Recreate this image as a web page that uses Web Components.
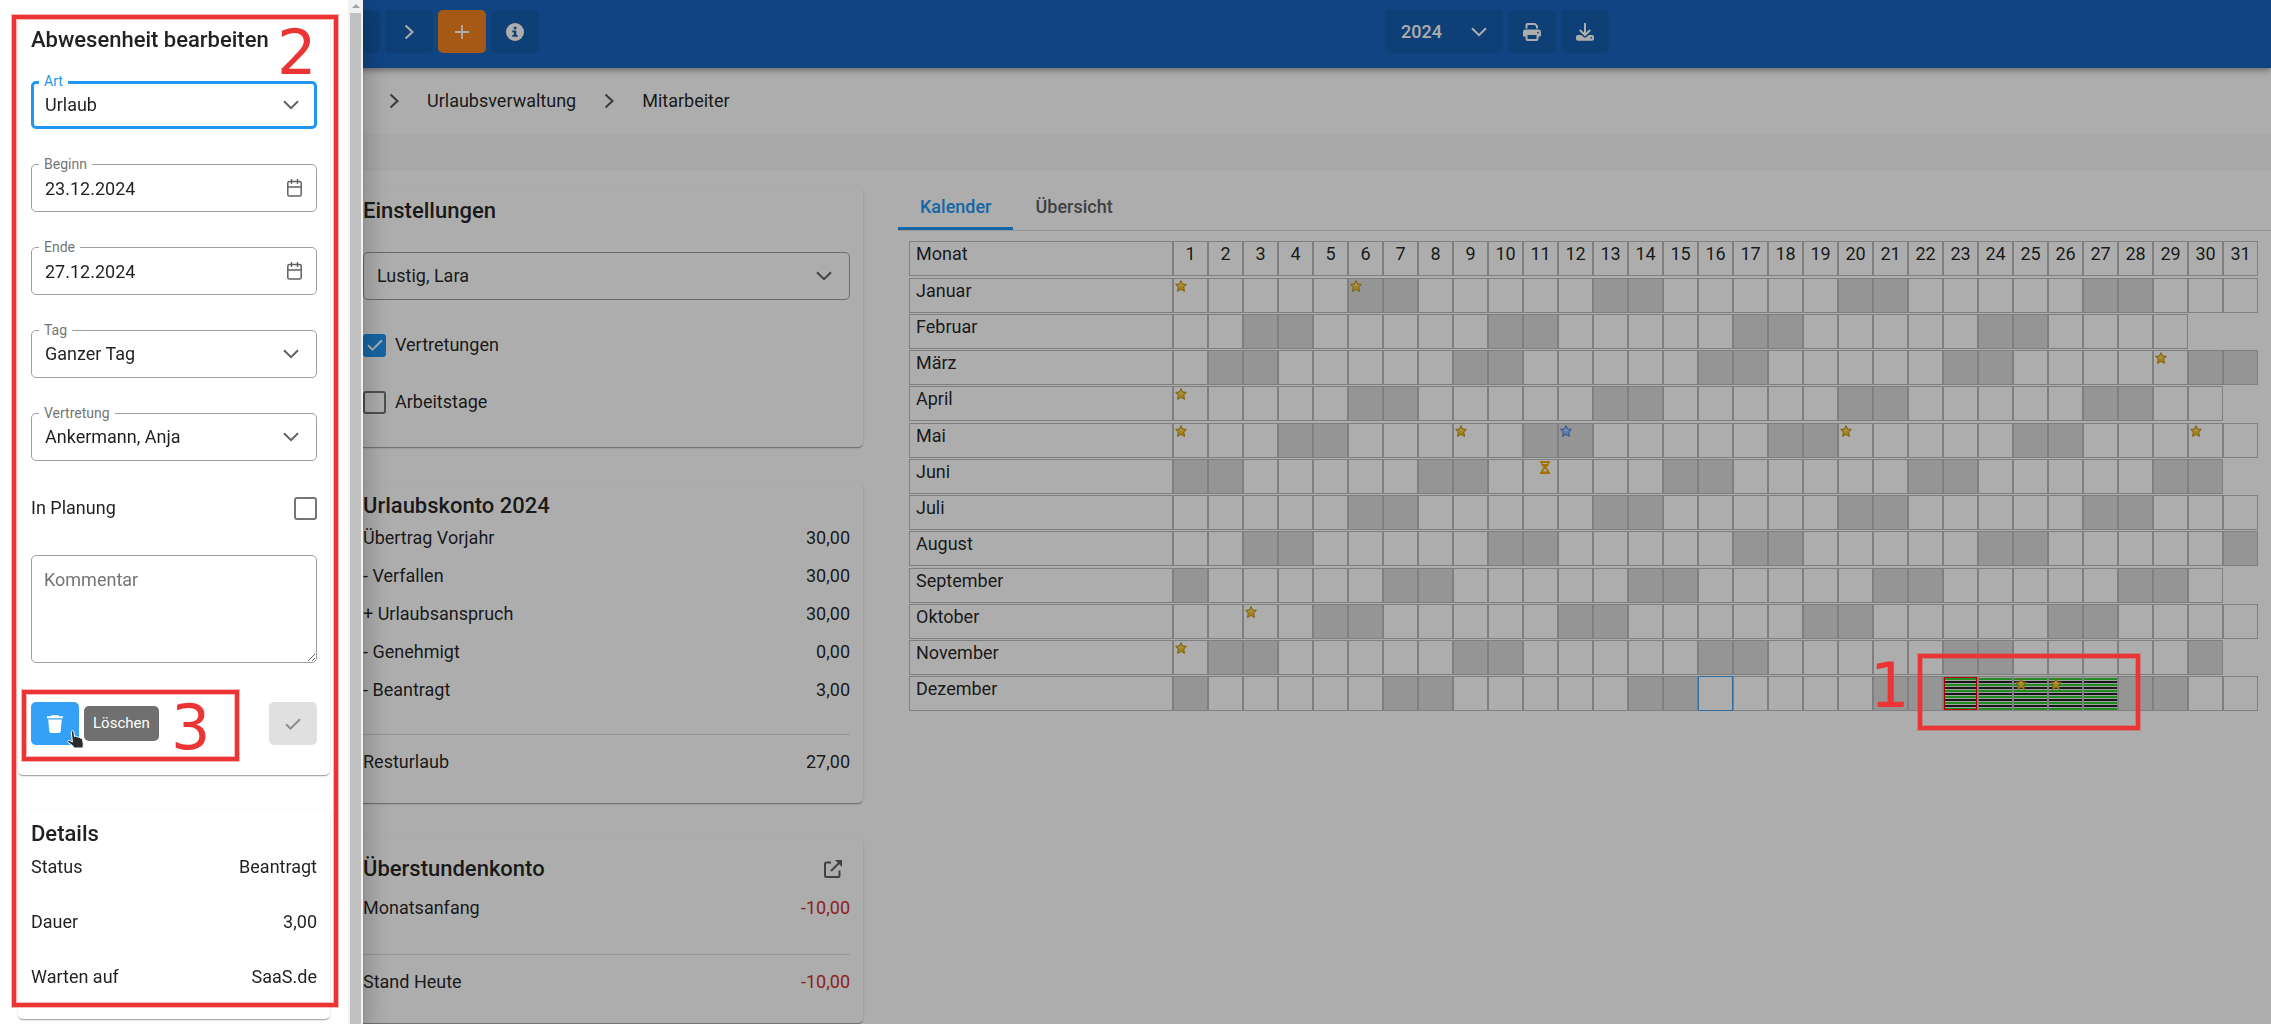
<!DOCTYPE html>
<html lang="de">
<head>
<meta charset="utf-8">
<title>Urlaubsverwaltung</title>
<style>
  html, body { margin: 0; height: 100%; }
  body { overflow: hidden; background: #fff; color: rgba(0,0,0,.87); font: 400 18px/24px Roboto, "Noto Sans", sans-serif; }
</style>
</head>
<body>
<absence-app></absence-app>

<script>
const ICONS = {
  'chevron-right': ['0 0 10 16', '<path d="M1.5 1.5 8.5 8l-7 6.5" fill="none" stroke="currentColor" stroke-width="2"/>', 10, 16],
  'chevron-left': ['0 0 10 16', '<path d="M8.500 1.500 1.500 8l7 6.500" fill="none" stroke="currentColor" stroke-width="2"/>', 10, 16],
  'chevron-down': ['0 0 16 10', '<path d="M1 1.200 8 8.200l7-7" fill="none" stroke="currentColor" stroke-width="2"/>', 16, 10],
  plus: ['0 0 16 16', '<path d="M8 1v14M1 8h14" stroke="currentColor" stroke-width="1.800"/>', 16, 16],
  info: ['0 0 18 18', '<circle cx="9" cy="9" r="9" fill="currentColor"/><path fill="var(--hole,#155dae)" d="M7.800 3.800h2.600v2.400H7.800zM6.300 7.400h4v4.600h1.400v1.800H6.300V12h1.500V9.200H6.300z"/>', 18, 18],
  print: ['0 0 18 18', '<path fill="currentColor" d="M4.500 0h7.700L15 2.800V5.500h-2V3.600L11.600 2H4.500v3.500h-2V2a2 2 0 0 1 2-2zM2.500 6.500h13A2.500 2.500 0 0 1 18 9v3.500a1 1 0 0 1-1 1h-1.500V16a2 2 0 0 1-2 2h-9a2 2 0 0 1-2-2v-2.500H1a1 1 0 0 1-1-1V9a2.500 2.500 0 0 1 2.500-2.500zM4.500 12v4h9v-4zM15 8.700a.9.9 0 1 0 0 1.800.9.9 0 0 0 0-1.800z" fill-rule="evenodd"/>', 18, 18],
  download: ['0 0 18 18', '<path d="M9 0v11.500M3.800 7 9 12l5.200-5" fill="none" stroke="currentColor" stroke-width="2"/><path fill="currentColor" fill-rule="evenodd" d="M2 12h3.200l2.300 2.100a2.200 2.200 0 0 0 3 0L12.800 12H16a2 2 0 0 1 2 2v1.800a2 2 0 0 1-2 2H2a2 2 0 0 1-2-2V14a2 2 0 0 1 2-2zm13.200 2.100a.8.8 0 1 0 0 1.600.8.8 0 0 0 0-1.600z"/>', 18, 18],
  calendar: ['0 0 15 18', '<rect x=".8" y="2.600" width="13.400" height="14.400" rx="1.600" fill="none" stroke="currentColor" stroke-width="1.500"/><path d="M1 8h13M4.500 0v5M10.500 0v5" fill="none" stroke="currentColor" stroke-width="1.400"/>', 15, 18],
  trash: ['0 0 16 18', '<path fill="currentColor" d="M5 0h6l1 1.200h4v2H0v-2h4zM1.200 4.600h13.600L13.700 16.500a1.700 1.700 0 0 1-1.700 1.500H4a1.700 1.700 0 0 1-1.700-1.500z"/>', 16, 18],
  check: ['0 0 16 12', '<path d="M1 6.300 5.500 10.600 15 1.200" fill="none" stroke="currentColor" stroke-width="2"/>', 16, 12],
  external: ['0 0 18 18', '<path d="M7 2.500H2.300A1.300 1.300 0 0 0 1 3.800V15.700A1.300 1.300 0 0 0 2.300 17H14.200a1.300 1.300 0 0 0 1.300-1.300V10.500" fill="none" stroke="currentColor" stroke-width="2"/><path d="M7 11 15 3" stroke="currentColor" stroke-width="2"/><path d="M11 0h7v7z" fill="currentColor"/>', 18, 18],
  star: ['0 0 12 12', '<path d="M6 .6 7.600 4 11.400 4.400 8.700 7 9.500 11.400 6 9.400 2.500 11.400 3.300 7 .6 4.400 4.400 4z" fill="var(--fill,#f2c32c)" stroke="var(--edge,#b98d14)"/><path d="M6 2 7 4.800 9.600 5 5.900 6.400 2.400 5 5 4.800z" fill="#fff" opacity=".35"/>', 12, 12],
  hourglass: ['0 0 10 13', '<path fill="#f2ac00" fill-rule="evenodd" d="M0 0h10v2H9v1.500L6.400 6.500 9 9.500V11h1v2H0v-2h1V9.500l2.600-3L1 3.500V2H0zM2.500 2v1h5V2zM5 7.600 2.800 10.400h4.400z"/>', 10, 13],
  hand: ['0 0 17 19', '<path d="M4.200 1.600c.6-1.300 2.500-1.100 2.700.4l.6 4.600c.7-.7 1.800-.4 2.100.3.700-.5 1.700-.2 2 .6.800-.4 1.700 0 2 .8 1 0 1.700.5 2 1.500l.7 4.200-.3 4H7.200L5.500 15.500 1 12.400c-.9-1.200.3-2.400 1.600-1.900L5.400 12z" fill="#2b2b2b" stroke="#fff"/>', 17, 19]
};

/* Base class: clones the template text of the class into an open shadow root. */
class Base extends HTMLElement {
  connectedCallback() {
    if (this.shadowRoot) return;
    const t = document.createElement('template');
    t.innerHTML = '<style>*{box-sizing:border-box}button,select,input,textarea{font:inherit;color:inherit;margin:0}' + this.css() + '</style>' + this.html();
    this.attachShadow({ mode: 'open' }).append(t.content.cloneNode(true));
  }
  css() { return ''; }
  html() { return '<slot></slot>'; }
  a(n, d = '') { return this.getAttribute(n) ?? d; }
}

customElements.define('ui-icon', class extends Base {
  css() { return ':host{display:inline-flex;flex:none;pointer-events:none}svg{display:block}'; }
  html() {
    const [box, body, w, h] = ICONS[this.a('name')];
    return `<svg viewBox="${box}" width="${w}" height="${h}" aria-hidden="true">${body}</svg>`;
  }
});

customElements.define('tool-button', class extends Base {
  css() {
    return `:host{display:block}
      button{display:flex;align-items:center;justify-content:center;width:48px;height:43px;padding:0;border:0;border-radius:5px;background:var(--tone,#155dae);color:var(--ink,#fff)}
      :host([plain]) button{width:34px;height:41px;background:none;color:#616161}`;
  }
  html() { return `<button type="button" aria-label="${this.a('label')}" ${this.hasAttribute('off') ? 'disabled' : ''}><ui-icon name="${this.a('icon')}"></ui-icon></button>`; }
});

customElements.define('app-header', class extends Base {
  css() {
    return `:host{display:block;position:relative;z-index:1;background:#1865c2;box-shadow:0 2px 4px -1px rgba(0,0,0,.2),0 4px 5px rgba(0,0,0,.14),0 1px 10px rgba(0,0,0,.12)}
      header{display:flex;height:68px;padding:10px 0 15px 332px}
      .group{display:flex;gap:5px}
      .a{flex:23}.b{flex:18}
      .year{display:grid;align-items:center;width:118px;border-radius:5px;background:#155dae;color:#fff}
      .year>*{grid-area:1/1}
      select{appearance:none;border:0;background:none;height:43px;padding:0 16px;font-weight:500}
      .year ui-icon{justify-self:end;margin-right:16px}`;
  }
  html() {
    return `<header>
      <div class="group">
        <tool-button icon="chevron-left" label="Zurück"></tool-button>
        <tool-button icon="chevron-right" label="Weiter"></tool-button>
        <tool-button icon="plus" label="Neu" style="--tone:#f58220"></tool-button>
        <tool-button icon="info" label="Info"></tool-button>
      </div>
      <span class="a"></span>
      <div class="group">
        <div class="year"><select aria-label="Jahr"><option>2024</option></select><ui-icon name="chevron-down"></ui-icon></div>
        <tool-button icon="print" label="Drucken"></tool-button>
        <tool-button icon="download" label="Herunterladen"></tool-button>
      </div>
      <span class="b"></span>
    </header>`;
  }
});

customElements.define('bread-crumbs', class extends Base {
  css() {
    return `:host{display:block;background:#fff;box-shadow:0 1px 3px rgba(0,0,0,.14),0 2px 6px rgba(0,0,0,.08)}
      nav{display:flex;align-items:center;gap:28px;height:66px;padding-left:389px}
      a{color:inherit;text-decoration:none}
      ui-icon{color:#555}`;
  }
  html() {
    return `<nav aria-label="Pfad"><ui-icon name="chevron-right"></ui-icon><a href="#verwaltung">Urlaubsverwaltung</a><ui-icon name="chevron-right"></ui-icon><a href="#mitarbeiter">Mitarbeiter</a></nav>`;
  }
});

customElements.define('card-panel', class extends Base {
  css() {
    return `:host{display:block;padding:10px 13px 12px;border-radius:5px;background:#fff;box-shadow:0 2px 1px -1px rgba(0,0,0,.2),0 1px 1px rgba(0,0,0,.14),0 1px 3px rgba(0,0,0,.12)}
      .head{display:flex;align-items:center;justify-content:space-between}
      h2{margin:0;font-size:22px;font-weight:500;line-height:27px}`;
  }
  html() { return `<div class="head"><h2>${this.a('heading')}</h2><slot name="action"></slot></div><slot></slot>`; }
});

customElements.define('form-field', class extends Base {
  css() {
    return `:host{display:block;position:relative}
      .box{display:grid;align-items:center;border:1px solid #9e9e9e;border-radius:5px;background:#fff}
      :host([active]) .box{border:3px solid #2196f3}
      .box>*{grid-area:1/1}
      select,input,textarea{appearance:none;width:100%;height:46px;padding:0 13px;border:0;outline:0;background:none}
      :host([active]) select{height:42px;padding:0 11px}
      textarea{display:block;height:106px;padding:12px;resize:vertical}
      textarea::placeholder{color:#757575}
      ui-icon{justify-self:end;margin-right:var(--inset,17px);color:#616161}
      :host([active]) ui-icon{margin-right:15px}
      label{position:absolute;left:8px;top:-8px;padding:0 5px;background:#fff;font-size:14px;line-height:16px;color:#757575}
      :host([active]) label{color:#2196f3}`;
  }
  html() {
    const k = this.a('kind', 'select'), l = this.a('label'), v = this.a('value');
    const label = this.hasAttribute('bare') ? '' : `<label for="f">${l}</label>`;
    const aria = this.hasAttribute('bare') ? `aria-label="${l}"` : '';
    const body = k === 'select' ? `<select id="f" ${aria}><option>${v}</option></select><ui-icon name="chevron-down"></ui-icon>`
      : k === 'date' ? `<input id="f" type="text" value="${v}"><ui-icon name="calendar" style="--inset:14px"></ui-icon>`
      : `<textarea id="f" ${aria} placeholder="${l}"></textarea>`;
    return `<div class="box">${body}</div>${label}`;
  }
});

customElements.define('check-field', class extends Base {
  css() {
    return `:host{display:block}
      label{display:flex;align-items:center;gap:9px;height:24px}
      :host([trailing]) label{flex-direction:row-reverse;justify-content:space-between}
      .tick{display:grid;place-items:center;width:23px;height:23px}
      .tick>*{grid-area:1/1}
      input{appearance:none;width:23px;height:23px;border:2px solid #757575;border-radius:3px}
      input:checked{border-color:#2196f3;background:#2196f3}
      ui-icon{color:#fff}
      input:not(:checked)+ui-icon{display:none}`;
  }
  html() { return `<label><span class="tick"><input type="checkbox" ${this.hasAttribute('on') ? 'checked' : ''}><ui-icon name="check"></ui-icon></span><span>${this.a('label')}</span></label>`; }
});

customElements.define('ledger-row', class extends Base {
  css() {
    return `:host{display:flex;justify-content:space-between;height:var(--row,38px)}
      :host([total]){height:auto;padding:15px 0 17px;border-top:1px solid #dcdcdc}
      :host([negative]) .v{color:#d32f2f}`;
  }
  html() { return `<span>${this.a('label')}</span><span class="v">${this.a('value')}</span>`; }
});

customElements.define('vacation-calendar', class extends Base {
  css() {
    return `:host{display:block;padding:0 13px 0 11px}
      table{display:grid;gap:2px}
      thead,tbody{display:grid;gap:1px}
      tr{display:grid;grid-template-columns:minmax(0,1fr) repeat(31,35px)}
      th,td{display:block;height:35px;border:1px solid #bcbcbc;font-weight:400}
      th{padding:0;text-align:center}
      th:first-child{padding-left:6px;text-align:left}
      td{padding:1px;text-align:left}
      td ui-icon{display:block;width:12px}
      .off{background:#dcdcdc}
      .today{border-color:#4ba3e8;background:#fff}
      .leave{padding:0;background:repeating-linear-gradient(0deg,#32cd32 0 2px,#eee 2px 3px,#222 3px 5px,#eee 5px 6px)}
      .leave ui-icon{padding:1px}
      .first{box-shadow:inset 0 0 0 1px red}
      .blue{--fill:#8fb8ff;--edge:#4a78d0}
      td .late{margin-left:15px}`;
  }
  html() {
    const names = ['Januar', 'Februar', 'März', 'April', 'Mai', 'Juni', 'Juli', 'August', 'September', 'Oktober', 'November', 'Dezember'];
    const stars = new Set(['1-1', '1-6', '3-29', '4-1', '5-1', '5-9', '5-20', '5-30', '10-3', '11-1', '12-25', '12-26']);
    const row = m => {
      let out = `<tr><th scope="row">${names[m - 1]}</th>`;
      for (let d = 1, n = new Date(2024, m, 0).getDate(); d <= n; d++) {
        const w = new Date(2024, m - 1, d).getDay(), key = m + '-' + d;
        const cls = m === 12 && d >= 23 && d <= 27 ? (d === 23 ? 'leave first' : 'leave') : key === '12-16' ? 'today' : w % 6 === 0 ? 'off' : '';
        const mark = stars.has(key) ? '<ui-icon name="star"></ui-icon>'
          : key === '5-12' ? '<ui-icon name="star" class="blue"></ui-icon>'
          : key === '6-11' ? '<ui-icon name="hourglass" class="late"></ui-icon>' : '';
        out += `<td class="${cls}">${mark}</td>`;
      }
      return out + '</tr>';
    };
    const days = Array.from({ length: 31 }, (_, i) => `<th scope="col">${i + 1}</th>`).join('');
    const block = s => `<tbody>${[0, 1, 2, 3].map(i => row(s + i)).join('')}</tbody>`;
    return `<table><thead><tr><th scope="col">Monat</th>${days}</tr></thead>${block(1)}${block(5)}${block(9)}</table>`;
  }
});

customElements.define('tab-strip', class extends Base {
  css() {
    return `:host{display:block;border-bottom:1px solid #dcdcdc}
      div{display:flex}
      button{height:43px;padding:0 22px;border:0;border-bottom:3px solid transparent;background:none;font-weight:500;color:#616161}
      [aria-selected=true]{border-color:#2196f3;color:#2196f3}`;
  }
  html() { return `<div role="tablist"><button role="tab" aria-selected="true">Kalender</button><button role="tab" aria-selected="false">Übersicht</button></div>`; }
});

customElements.define('absence-drawer', class extends Base {
  css() {
    return `:host{display:flex;position:fixed;inset:0 auto 0 0;z-index:3;width:363px;background:#fff;overflow:visible;box-shadow:0 8px 10px -5px rgba(0,0,0,.2),0 16px 24px 2px rgba(0,0,0,.14),0 6px 30px 5px rgba(0,0,0,.12)}
      .body{display:flex;flex-direction:column;gap:35px;flex:1;padding:16px 18px;min-width:0}
      form{display:flex;flex-direction:column;gap:35px;padding:28px 0 18px}
      .actions{display:flex;align-items:center;gap:5px;padding-top:4px}
      .tip{padding:0 9px;border-radius:5px;background:#707070;color:#fff;font-size:15px;line-height:35px}
      .actions tool-button:last-child{margin-left:auto}
      ledger-row{--row:55px}
      ledger-row:last-child{--row:42px}
      .rows{padding-top:8px}
      .rail{display:flex;flex-direction:column;align-items:center;width:15px;padding-top:4px;background:#f1f1f1}
      .rail i{border:4px solid transparent;border-top:0;border-bottom:4px solid #a3a3a3}
      .rail b{flex:1;width:11px;margin-top:5px;background:#c1c1c1}`;
  }
  html() {
    return `<div class="body">
      <card-panel heading="Abwesenheit bearbeiten">
        <form>
          <form-field active label="Art" value="Urlaub"></form-field>
          <form-field kind="date" label="Beginn" value="23.12.2024"></form-field>
          <form-field kind="date" label="Ende" value="27.12.2024"></form-field>
          <form-field label="Tag" value="Ganzer Tag"></form-field>
          <form-field label="Vertretung" value="Ankermann, Anja"></form-field>
          <check-field trailing label="In Planung"></check-field>
          <form-field kind="area" bare label="Kommentar"></form-field>
          <div class="actions">
            <tool-button icon="trash" label="Löschen" style="--tone:#35a0f7"></tool-button>
            <span class="tip" role="tooltip">Löschen</span>
            <tool-button icon="check" label="Speichern" off style="--tone:#e0e0e0;--ink:#8c8c8c"></tool-button>
          </div>
        </form>
      </card-panel>
      <card-panel heading="Details">
        <div class="rows">
          <ledger-row label="Status" value="Beantragt"></ledger-row>
          <ledger-row label="Dauer" value="3,00"></ledger-row>
          <ledger-row label="Warten auf" value="SaaS.de"></ledger-row>
        </div>
      </card-panel>
    </div>
    <div class="rail"><i></i><b></b></div>`;
  }
});

/* A red frame with a step number, laid over the page. */
customElements.define('step-mark', class extends Base {
  css() {
    return `:host{display:block;position:absolute;z-index:4;border:4px solid #eb3434;box-shadow:0 0 0 1px rgba(235,52,52,.35),inset 0 0 0 1px rgba(235,52,52,.35);pointer-events:none}
      span{position:absolute;left:var(--nx);top:var(--ny);font:62px/62px "DejaVu Sans",sans-serif;color:#eb3434}`;
  }
  html() { return `<span>${this.a('step')}</span>`; }
});

customElements.define('absence-app', class extends Base {
  css() {
    return `:host{display:block;min-height:100vh;background:#fff}
      .strip{height:35px;background:#f9f9f9}
      main{display:flex;align-items:flex-start;gap:35px;padding:17px 0 0 350px;border-top:1px solid #f2f2f2}
      .side{display:flex;flex-direction:column;gap:35px;width:513px;flex:none}
      .settings{display:flex;flex-direction:column;gap:33px;padding:28px 0 21px}
      .rows{padding-top:7px}
      .work{flex:1;min-width:0;display:flex;flex-direction:column;gap:10px}
      .shade{position:fixed;inset:0;z-index:2;background:rgba(0,0,0,.32)}
      .cursor{position:absolute;z-index:5;left:67px;top:730px}
      .s1{left:1918px;top:654px;width:222px;height:76px;--nx:-52px;--ny:-3px}
      .s2{left:12px;top:15px;width:326px;height:992px;--nx:261px;--ny:3px}
      .s3{left:22px;top:690px;width:217px;height:71px;--nx:145px;--ny:3px}`;
  }
  html() {
    return `<app-header></app-header>
    <bread-crumbs></bread-crumbs>
    <div class="strip"></div>
    <main>
      <div class="side">
        <card-panel heading="Einstellungen">
          <div class="settings">
            <form-field bare label="Mitarbeiter" value="Lustig, Lara"></form-field>
            <check-field on label="Vertretungen"></check-field>
            <check-field label="Arbeitstage"></check-field>
          </div>
        </card-panel>
        <card-panel heading="Urlaubskonto 2024">
          <div class="rows">
            <ledger-row label="Übertrag Vorjahr" value="30,00"></ledger-row>
            <ledger-row label="- Verfallen" value="30,00"></ledger-row>
            <ledger-row label="+ Urlaubsanspruch" value="30,00"></ledger-row>
            <ledger-row label="- Genehmigt" value="0,00"></ledger-row>
            <ledger-row label="- Beantragt" value="3,00" style="--row:56px"></ledger-row>
            <ledger-row total label="Resturlaub" value="27,00"></ledger-row>
          </div>
        </card-panel>
        <card-panel heading="Überstundenkonto">
          <tool-button plain slot="action" icon="external" label="Öffnen"></tool-button>
          <div class="rows">
            <ledger-row negative label="Monatsanfang" value="-10,00" style="--row:58px"></ledger-row>
            <ledger-row total negative label="Stand Heute" value="-10,00"></ledger-row>
          </div>
        </card-panel>
      </div>
      <div class="work"><tab-strip></tab-strip><vacation-calendar></vacation-calendar></div>
    </main>
    <div class="shade"></div>
    <absence-drawer></absence-drawer>
    <step-mark class="s1" step="1"></step-mark>
    <step-mark class="s2" step="2"></step-mark>
    <step-mark class="s3" step="3"></step-mark>
    <ui-icon class="cursor" name="hand"></ui-icon>`;
  }
});
</script>
</body>
</html>
